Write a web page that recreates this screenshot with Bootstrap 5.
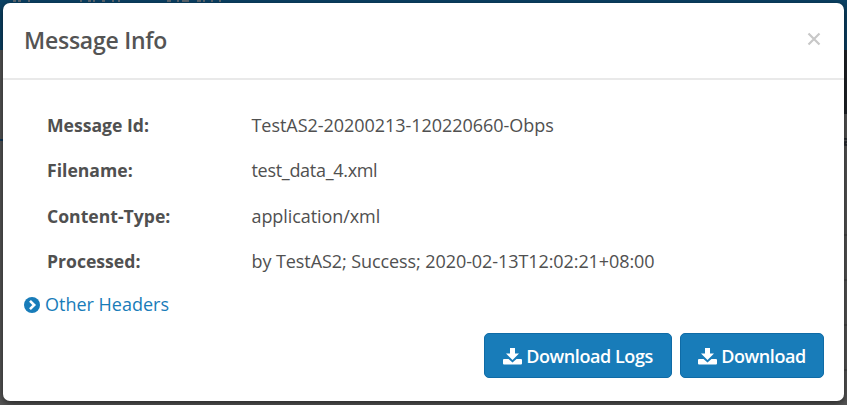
<!DOCTYPE html>
<html lang="en">
<head>
<meta charset="utf-8">
<meta name="viewport" content="width=device-width, initial-scale=1">
<title>Message Info</title>
<link href="https://cdn.jsdelivr.net/npm/bootstrap@5.3.0/dist/css/bootstrap.min.css" rel="stylesheet">
<style>
body{margin:0;width:847px;height:405px;overflow:hidden;background:#565656;color:#505050;font-family:"Open Sans","Noto Sans",sans-serif;font-size:18px}
.page-back{inset:0;overflow:hidden}
.top-bar{height:50px;background:#0b4265}
.top-bar svg{display:block}
.side-strip{height:64px;background:#202428;margin-left:420px}
.edge-line{height:2px;background:#123a5c;width:4px;margin-top:25px}
.edge-rules{width:4px;margin-left:843px;margin-top:88px}
.edge-rules div{height:45px;border-top:2px solid #474747}
.info-dialog{margin:3px 3px 0 3px;width:841px;height:398px}
.info-dialog .modal-content{height:398px;background:#fff;border:0;border-radius:7px;box-shadow:0 2px 7px rgba(0,0,0,.6);color:#505050}
.info-dialog .modal-header{height:77px;padding:0 23px 0 21px;border-bottom:2px solid #e9e9e9;border-radius:0}
.info-title{font-size:23px;font-weight:600;line-height:30px;color:#545454;letter-spacing:-.25px;padding-bottom:1px}
.close-x{margin-bottom:3px}
.info-body{padding:23px 21px 0}
.field-row{height:45.3px;line-height:45.3px;padding-left:23px}
.field-key{width:204.5px;font-weight:700;font-size:17.6px}
.field-val{letter-spacing:-.04px}
.field-val.tight{letter-spacing:-.3px}
.field-val.snug{letter-spacing:-.08px}
.other-link{color:#187cb9;height:41px;gap:5px;text-decoration:none}
.info-actions{padding:0 20px 23px;gap:8px}
.btn-dl,.btn-dl:hover{background:#187cb9;border:1px solid #0f6ba6;color:#fff}
.btn-dl{height:45px;padding:1px 0 0;border-radius:5px;gap:4px;font-size:18px;font-weight:600;letter-spacing:-.43px}
.btn-a{width:188px}.btn-b{width:144px}
</style>
<script src="https://cdn.jsdelivr.net/npm/bootstrap@5.3.0/dist/js/bootstrap.bundle.min.js"></script>
</head>
<body>
<div class="page-back position-absolute">
<div class="top-bar"><svg width="250" height="3" viewBox="0 0 250 3" fill="none" stroke="#5d6870" stroke-width="2"><path d="M13 1h3M18 1h3M28 1h2M80 1h2M88 1h3M93 1h2M102 1h3M112 1h2M118 1h2M167 1h4M177 1h2M182 1h7M197 1h4M203 1h2M211 1h2M219 1h2"/></svg></div>
<div class="d-flex"><div class="flex-grow-1"></div><div class="side-strip flex-grow-1"></div></div>
<div class="d-flex justify-content-between"><div class="edge-line"></div><svg class="mt-4" width="4" height="8" viewBox="0 0 4 8" fill="none" stroke="#20262c" stroke-width="1.500"><path d="M4 -2H2v3h2M4 4H2v3h2"/></svg></div>
<div class="edge-rules"><div></div><div></div><div></div><div></div></div>
</div>
<div class="info-dialog position-relative">
<div class="modal-content">
<div class="modal-header d-flex align-items-center justify-content-between">
<h4 class="info-title m-0">Message Info</h4>
<svg class="close-x" width="14" height="14" viewBox="0 0 14 14" stroke="#c8c8c8" stroke-width="2.2"><path d="M1.500 1.500l11 11M12.500 1.500l-11 11"/></svg>
</div>
<div class="info-body flex-grow-1">
<div class="field-row d-flex"><div class="field-key">Message Id:</div><div class="field-val">TestAS2-20200213-120220660-Obps</div></div>
<div class="field-row d-flex"><div class="field-key">Filename:</div><div class="field-val tight">test_data_4.xml</div></div>
<div class="field-row d-flex"><div class="field-key">Content-Type:</div><div class="field-val snug">application/xml</div></div>
<div class="field-row d-flex"><div class="field-key">Processed:</div><div class="field-val snug">by TestAS2; Success; 2020-02-13T12:02:21+08:00</div></div>
<a class="other-link d-flex align-items-center" href="#"><svg width="16" height="16" viewBox="0 0 16 16"><circle cx="8" cy="8" r="8" fill="#187cb9"/><path d="M6 3.800L10.200 8 6 12.200" fill="none" stroke="#fff" stroke-width="2.600"/></svg><span>Other Headers</span></a>
</div>
<div class="info-actions d-flex justify-content-end">
<button class="btn btn-dl btn-a d-flex align-items-center justify-content-center"><svg width="19" height="17" viewBox="0 0 19 17" fill="#fff"><path d="M7 0h5v5.500h4L9.500 12 3 5.500h4z"/><path d="M1 11h4.500l4 3.500 4-3.500H18a1 1 0 0 1 1 1v3.500a1 1 0 0 1-1 1H1a1 1 0 0 1-1-1V12a1 1 0 0 1 1-1z"/></svg><span>Download Logs</span></button>
<button class="btn btn-dl btn-b d-flex align-items-center justify-content-center"><svg width="19" height="17" viewBox="0 0 19 17" fill="#fff"><path d="M7 0h5v5.500h4L9.500 12 3 5.500h4z"/><path d="M1 11h4.500l4 3.500 4-3.500H18a1 1 0 0 1 1 1v3.500a1 1 0 0 1-1 1H1a1 1 0 0 1-1-1V12a1 1 0 0 1 1-1z"/></svg><span>Download</span></button>
</div>
</div>
</div>
</body>
</html>
